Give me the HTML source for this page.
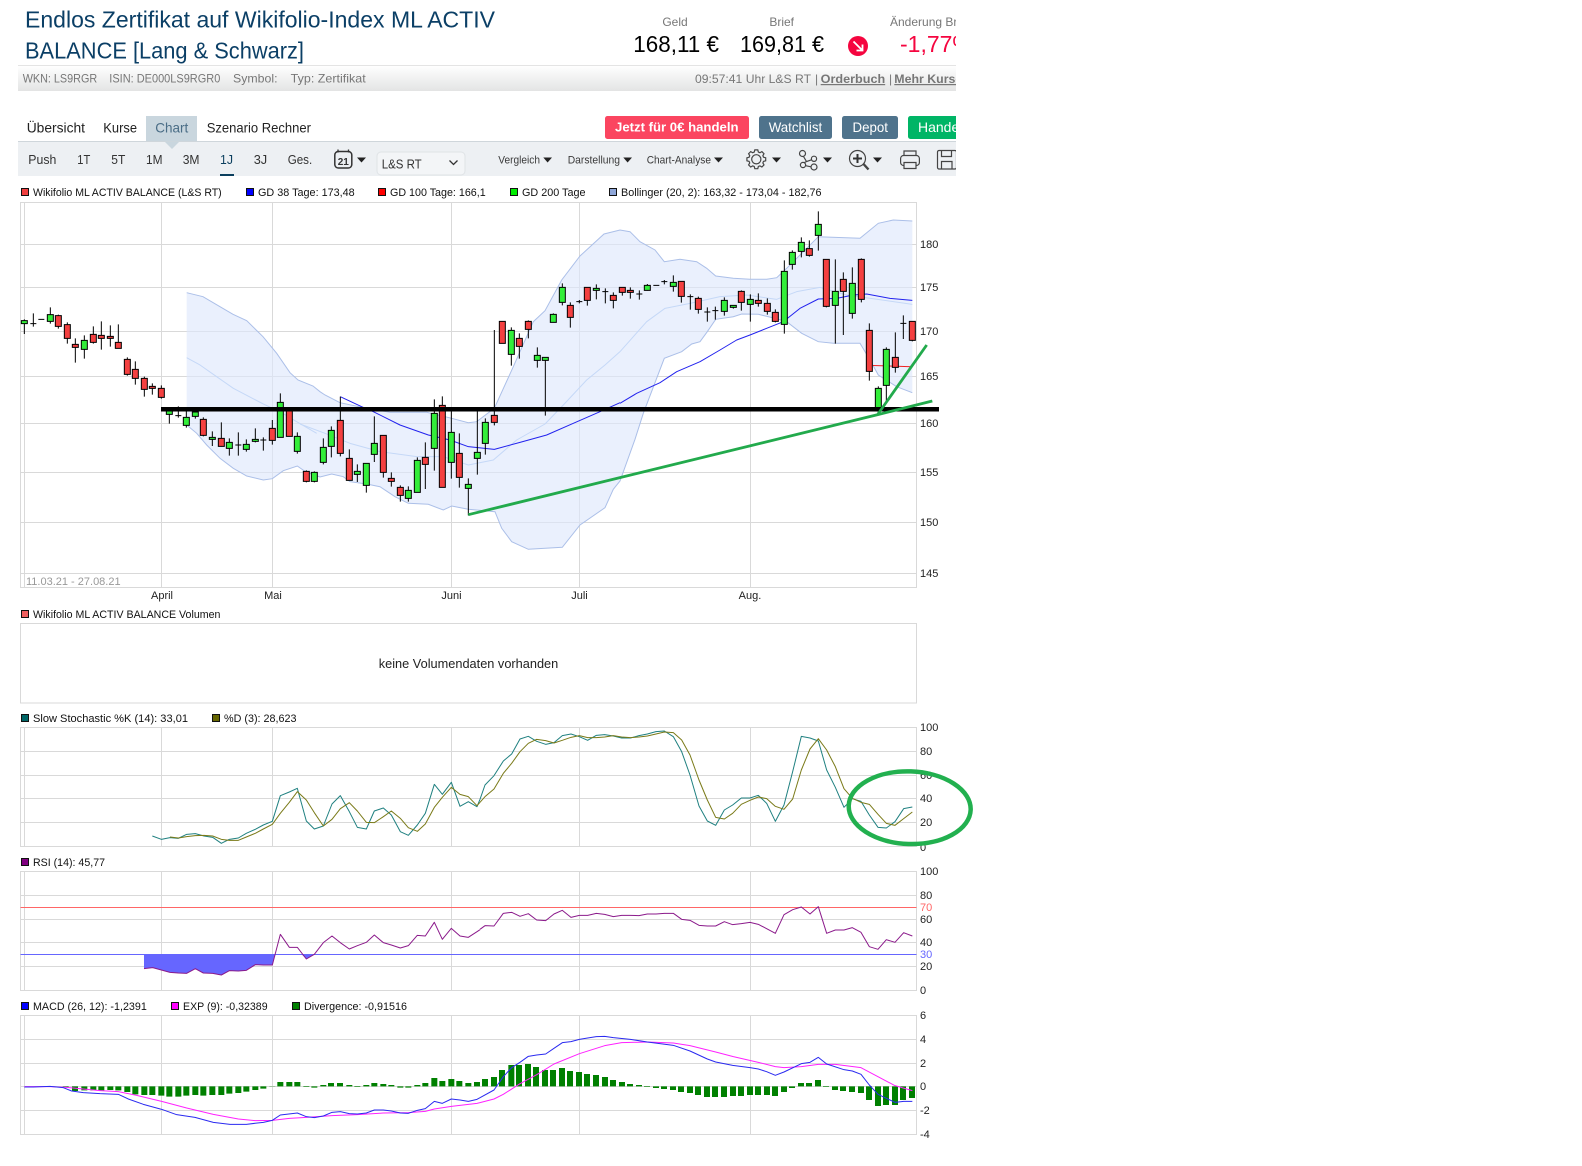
<!DOCTYPE html>
<html lang="de">
<head>
<meta charset="utf-8">
<title>Endlos Zertifikat auf Wikifolio-Index ML ACTIV BALANCE</title>
<style>
html,body{margin:0;padding:0;background:#fff}
svg{display:block;font-family:"Liberation Sans",Arial,sans-serif}
.v{vector-effect:non-scaling-stroke}
.ln{fill:none;vector-effect:non-scaling-stroke;stroke-width:1;stroke-linejoin:round}
.g{stroke:#d9d9d9;stroke-width:1;fill:none}
.lg{font-size:11px;fill:#111}
.ax{font-size:11px;fill:#222}
.ui{font-size:13px;fill:#333}
.sm{font-size:11px;fill:#3a3a3a}
.info{font-size:12px;fill:#777}
.ic{fill:none;stroke:#444;stroke-width:1.2}
</style>
</head>
<body>
<svg xmlns="http://www.w3.org/2000/svg" width="1582" height="1166" viewBox="0 0 1582 1166">
<defs>
<clipPath id="pg"><rect x="0" y="0" width="956" height="180"/></clipPath>
<linearGradient id="bar" x1="0" y1="0" x2="0" y2="1"><stop offset="0" stop-color="#fff"/><stop offset="1" stop-color="#e3e4e4"/></linearGradient>
</defs>

<g clip-path="url(#pg)">
<text x="25" y="27.5" font-size="23.5" fill="#0b3f66" textLength="470" lengthAdjust="spacingAndGlyphs">Endlos Zertifikat auf Wikifolio-Index ML ACTIV</text>
<text x="25" y="58.5" font-size="23.5" fill="#0b3f66" textLength="279" lengthAdjust="spacingAndGlyphs">BALANCE [Lang &amp; Schwarz]</text>

<text x="675" y="26" class="info" text-anchor="middle">Geld</text>
<text x="781.7" y="26" class="info" text-anchor="middle">Brief</text>
<text x="890" y="26" class="info">Änderung Brief</text>
<text x="633.3" y="52" font-size="23" fill="#000" textLength="85.7" lengthAdjust="spacingAndGlyphs">168,11 €</text>
<text x="740" y="52" font-size="23" fill="#000" textLength="84" lengthAdjust="spacingAndGlyphs">169,81 €</text>
<circle cx="858" cy="46" r="10" fill="#f5053f"/>
<path d="M853.5 41.5L862 50M862.5 44.5V50.5H856.5" fill="none" stroke="#fff" stroke-width="1.8"/>
<text x="900" y="52" font-size="23" fill="#f5053f">-1,77%</text>

<rect x="18" y="65.5" width="938" height="25.5" fill="url(#bar)"/>
<rect x="18" y="65" width="938" height="1" fill="#e4e4e4"/>
<text x="22.7" y="82.5" class="info" textLength="74.5" lengthAdjust="spacingAndGlyphs">WKN: LS9RGR</text>
<text x="109.3" y="82.5" class="info" textLength="111" lengthAdjust="spacingAndGlyphs">ISIN: DE000LS9RGR0</text>
<text x="233" y="82.5" class="info" textLength="44.5" lengthAdjust="spacingAndGlyphs">Symbol:</text>
<text x="290.7" y="82.5" class="info" textLength="75" lengthAdjust="spacingAndGlyphs">Typ: Zertifikat</text>
<text x="695" y="83" class="info" textLength="116" lengthAdjust="spacingAndGlyphs">09:57:41 Uhr L&amp;S RT</text>
<text x="815" y="83" class="info">|</text>
<text x="820.7" y="83" class="info" font-weight="bold" text-decoration="underline" textLength="64.5" lengthAdjust="spacingAndGlyphs">Orderbuch</text>
<text x="889" y="83" class="info">|</text>
<text x="894.3" y="83" class="info" font-weight="bold" text-decoration="underline" textLength="68" lengthAdjust="spacingAndGlyphs">Mehr Kurse</text>

<rect x="146" y="116" width="51" height="25" fill="#c9d6de"/>
<text x="26.7" y="132.7" font-size="14" fill="#222" textLength="58.3" lengthAdjust="spacingAndGlyphs">Übersicht</text>
<text x="103.3" y="132.7" font-size="14" fill="#222" textLength="33.7" lengthAdjust="spacingAndGlyphs">Kurse</text>
<text x="155.3" y="132.7" font-size="14" fill="#4a6d86" textLength="33" lengthAdjust="spacingAndGlyphs">Chart</text>
<text x="206.7" y="132.7" font-size="14" fill="#222" textLength="104.3" lengthAdjust="spacingAndGlyphs">Szenario Rechner</text>

<rect x="605" y="116" width="144" height="23" rx="2.5" fill="#fb4560"/>
<text x="615" y="131.7" font-size="13" font-weight="bold" fill="#fff" textLength="123.5" lengthAdjust="spacingAndGlyphs">Jetzt für 0€ handeln</text>
<rect x="759" y="116" width="73" height="23" rx="2.5" fill="#4f738c"/>
<text x="768.7" y="132" font-size="14" fill="#fff" textLength="53.5" lengthAdjust="spacingAndGlyphs">Watchlist</text>
<rect x="842" y="116" width="56" height="23" rx="2.5" fill="#4f738c"/>
<text x="852.500" y="132" font-size="14" fill="#fff" textLength="35.500" lengthAdjust="spacingAndGlyphs">Depot</text>
<rect x="908" y="116" width="60" height="23" rx="2.5" fill="#00b566"/>
<text x="918" y="132" font-size="14" fill="#fff">Handeln</text>

<rect x="18" y="141" width="938" height="35" fill="#edf0f3"/>
<rect x="18" y="141" width="938" height="1" fill="#cfd6db"/>
<path d="M164.500 141.500H179.500L172 149Z" fill="#c9d6de"/>

<text x="28.3" y="164" class="ui" textLength="28" lengthAdjust="spacingAndGlyphs">Push</text>
<text x="77.3" y="164" class="ui" textLength="13" lengthAdjust="spacingAndGlyphs">1T</text>
<text x="111.3" y="164" class="ui" textLength="14" lengthAdjust="spacingAndGlyphs">5T</text>
<text x="146" y="164" class="ui" textLength="16.500" lengthAdjust="spacingAndGlyphs">1M</text>
<text x="182.700" y="164" class="ui" textLength="16.800" lengthAdjust="spacingAndGlyphs">3M</text>
<text x="220" y="164" class="ui" style="fill:#0b3f5e" textLength="13" lengthAdjust="spacingAndGlyphs">1J</text>
<rect x="220" y="174" width="14" height="2" fill="#0b3f5e"/>
<text x="253.700" y="164" class="ui" textLength="13.500" lengthAdjust="spacingAndGlyphs">3J</text>
<text x="287.700" y="164" class="ui" textLength="24.500" lengthAdjust="spacingAndGlyphs">Ges.</text>

<rect x="334.800" y="151.500" width="17" height="16.500" rx="3.500" fill="none" stroke="#333" stroke-width="1.500"/>
<path d="M338 149.500V152.500M348.500 149.500V152.500" stroke="#333" stroke-width="1.300"/>
<text x="343.300" y="165" font-size="10" font-weight="bold" fill="#333" text-anchor="middle">21</text>
<path d="M357 157.500H366L361.500 162.500Z" fill="#222"/>

<rect x="377" y="152" width="88" height="23" rx="4" fill="#f3f5f7" stroke="#dfe3e6"/>
<text x="381.700" y="168.300" class="ui" textLength="40" lengthAdjust="spacingAndGlyphs">L&amp;S RT</text>
<path d="M449.500 160.500L453.500 164.500L457.500 160.500" fill="none" stroke="#333" stroke-width="1.300"/>

<text x="498.300" y="163.300" class="sm" textLength="41.700" lengthAdjust="spacingAndGlyphs">Vergleich</text>
<path d="M543.300 157.500H552L547.600 162.500Z" fill="#222"/>
<text x="567.700" y="163.300" class="sm" textLength="52.300" lengthAdjust="spacingAndGlyphs">Darstellung</text>
<path d="M623.300 157.500H632L627.600 162.500Z" fill="#222"/>
<text x="646.700" y="163.300" class="sm" textLength="64.300" lengthAdjust="spacingAndGlyphs">Chart-Analyse</text>
<path d="M714 157.500H723L718.500 162.500Z" fill="#222"/>

<g transform="translate(756.300 159.300)">
<path class="ic" d="M7.200 -2.070L9.390 -1.490V1.490L7.200 2.070L6.560 3.640L7.690 5.580L5.580 7.690L3.640 6.560L2.070 7.200L1.490 9.390H-1.490L-2.070 7.200L-3.640 6.560L-5.580 7.690L-7.690 5.580L-6.560 3.640L-7.200 2.070L-9.390 1.490V-1.490L-7.200 -2.070L-6.560 -3.640L-7.690 -5.580L-5.580 -7.690L-3.640 -6.560L-2.070 -7.200L-1.490 -9.390H1.490L2.070 -7.200L3.640 -6.560L5.580 -7.690L7.690 -5.580L6.560 -3.640Z"/>
<circle r="4.600" class="ic" stroke-width="1.600"/>
</g>
<path d="M772 157.500H781L776.500 162.500Z" fill="#222"/>

<g class="ic">
<circle cx="802.500" cy="153.500" r="3"/>
<circle cx="814" cy="158.800" r="2.600"/>
<circle cx="803" cy="165" r="2.600"/>
<circle cx="814" cy="167" r="3"/>
<path d="M803.500 156.500L806.500 161.500M811.500 159.800L806.500 161.500L804 162.800M805.500 165.700L811 166.800"/>
</g>
<path d="M823 157.500H832L827.500 162.500Z" fill="#222"/>

<circle cx="857.500" cy="158.500" r="8" class="ic"/>
<path d="M863.500 164L868.500 169.500" stroke="#444" stroke-width="2.400" fill="none"/>
<path d="M853 158.500H862M857.500 154V163" stroke="#333" stroke-width="2" fill="none"/>
<path d="M873 157.500H882L877.500 162.500Z" fill="#222"/>

<g class="ic">
<path d="M904 156V151H916V156"/>
<rect x="900.600" y="155.500" width="18.800" height="10" rx="3"/>
<path d="M904 162.500H916V168.500H904Z" fill="#edf0f3"/>
</g>
<g class="ic">
<rect x="937.500" y="150.500" width="19" height="18.500" rx="1.500"/>
<path d="M941.500 150.500V156.500H951.500V150.500M941.500 169V161.500H952V169"/>
</g>
</g>

<!-- Legend main -->
<g stroke="#111" stroke-width="1">
<rect x="21.500" y="188.500" width="7" height="7" fill="#f04040"/>
<rect x="246.500" y="188.500" width="7" height="7" fill="#0000ff"/>
<rect x="378.500" y="188.500" width="7" height="7" fill="#ff0000"/>
<rect x="510.500" y="188.500" width="7" height="7" fill="#00ee00"/>
<rect x="609.500" y="188.500" width="7" height="7" fill="#8ea6d8"/>
<rect x="21.500" y="610.500" width="7" height="7" fill="#f06060"/>
<rect x="21.500" y="714.500" width="7" height="7" fill="#006666"/>
<rect x="212.500" y="714.500" width="7" height="7" fill="#666600"/>
<rect x="21.500" y="858.500" width="7" height="7" fill="#800080"/>
<rect x="21.500" y="1002.500" width="7" height="7" fill="#0000ff"/>
<rect x="171.500" y="1002.500" width="7" height="7" fill="#ff00ff"/>
<rect x="292.500" y="1002.500" width="7" height="7" fill="#008000"/>
</g>
<text x="33" y="196" class="lg" textLength="188.700" lengthAdjust="spacingAndGlyphs">Wikifolio ML ACTIV BALANCE (L&amp;S RT)</text>
<text x="258" y="196" class="lg" textLength="96.700" lengthAdjust="spacingAndGlyphs">GD 38 Tage: 173,48</text>
<text x="390" y="196" class="lg" textLength="95.700" lengthAdjust="spacingAndGlyphs">GD 100 Tage: 166,1</text>
<text x="522" y="196" class="lg" textLength="63.500" lengthAdjust="spacingAndGlyphs">GD 200 Tage</text>
<text x="621" y="196" class="lg" textLength="200.500" lengthAdjust="spacingAndGlyphs">Bollinger (20, 2): 163,32 - 173,04 - 182,76</text>
<text x="33" y="618" class="lg" textLength="187.400" lengthAdjust="spacingAndGlyphs">Wikifolio ML ACTIV BALANCE Volumen</text>
<text x="33" y="722" class="lg" textLength="155" lengthAdjust="spacingAndGlyphs">Slow Stochastic %K (14): 33,01</text>
<text x="224" y="722" class="lg" textLength="72.500" lengthAdjust="spacingAndGlyphs">%D (3): 28,623</text>
<text x="33" y="866" class="lg" textLength="72" lengthAdjust="spacingAndGlyphs">RSI (14): 45,77</text>
<text x="33" y="1010" class="lg" textLength="113.800" lengthAdjust="spacingAndGlyphs">MACD (26, 12): -1,2391</text>
<text x="183" y="1010" class="lg" textLength="84.600" lengthAdjust="spacingAndGlyphs">EXP (9): -0,32389</text>
<text x="304" y="1010" class="lg" textLength="103" lengthAdjust="spacingAndGlyphs">Divergence: -0,91516</text>

<!-- Main chart grid -->
<path class="g" d="M20.500 202.500H916.500V587.500H20.500ZM24.500 202.500V587.500M161.500 202.500V587.500M272.500 202.500V587.500M451.500 202.500V587.500M579.500 202.500V587.500M750.500 202.500V587.500M20.500 244.500H916.500M20.500 287.500H916.500M20.500 331.500H916.500M20.500 376.500H916.500M20.500 423.500H916.500M20.500 472.500H916.500M20.500 522.500H916.500M20.500 573.500H916.500"/>

<polygon fill="#dde7fb" fill-opacity=".62" points="186.700,292.700 203,296.700 220,306.700 233,314.300 246.700,320.700 263,336.700 276.700,353.300 290,372.700 298,380 313,386 320,391.700 325,395 340,402.700 361.700,407.300 390,412.300 426.700,412.300 451.700,418.300 468.300,422.700 476.700,421.700 494.300,408.300 513.300,366.700 533.300,321.700 545,310.700 561.700,280 580,256 604,234 620,230 630,231.700 640,241.700 655,250 664.300,261.700 680,259.300 696.700,261.700 706.700,268.300 715.700,276 733.300,278.300 750,279.300 766.700,279.300 776.700,277.700 786.700,268.300 801.700,253.300 818.300,236.700 860,238.300 878.300,223.300 893.300,220 912.300,221 912.300,392.700 896.700,386.700 878.300,375 870,360 860,343.300 833.300,343.300 818.300,341.700 801.700,333.300 786.700,321.700 775,318.300 758.300,314.300 741.700,314 733.300,316.700 715.700,319.300 707.300,331.700 700,341.700 691.700,344 681.700,351.700 664.300,358.300 643.300,413.300 635,439.300 620,481 613.300,489.300 605,507.700 580,525 562.300,547.300 528.300,549.300 511.700,541.700 501.700,528.300 495,511.700 468.300,509.300 451.700,506 443.300,510 428.300,504.300 408.300,503.300 395,496.700 380,486.700 366.700,484 350,481.700 343.300,476.700 331.700,474 320,477 306,472 297.300,466 283.300,470.700 272.300,478.700 263.300,480 246.700,476 233.300,468.300 220,458.300 206.700,445 196.700,433.300 186.700,425"/>
<polyline fill="none" stroke="#abbfe8" stroke-width="1" points="186.700,292.700 203,296.700 220,306.700 233,314.300 246.700,320.700 263,336.700 276.700,353.300 290,372.700 298,380 313,386 320,391.700 325,395 340,402.700 361.700,407.300 390,412.300 426.700,412.300 451.700,418.300 468.300,422.700 476.700,421.700 494.300,408.300 513.300,366.700 533.300,321.700 545,310.700 561.700,280 580,256 604,234 620,230 630,231.700 640,241.700 655,250 664.300,261.700 680,259.300 696.700,261.700 706.700,268.300 715.700,276 733.300,278.300 750,279.300 766.700,279.300 776.700,277.700 786.700,268.300 801.700,253.300 818.300,236.700 860,238.300 878.300,223.300 893.300,220 912.300,221"/>
<polyline fill="none" stroke="#abbfe8" stroke-width="1" points="912.300,392.700 896.700,386.700 878.300,375 870,360 860,343.300 833.300,343.300 818.300,341.700 801.700,333.300 786.700,321.700 775,318.300 758.300,314.300 741.700,314 733.300,316.700 715.700,319.300 707.300,331.700 700,341.700 691.700,344 681.700,351.700 664.300,358.300 643.300,413.300 635,439.300 620,481 613.300,489.300 605,507.700 580,525 562.300,547.300 528.300,549.300 511.700,541.700 501.700,528.300 495,511.700 468.300,509.300 451.700,506 443.300,510 428.300,504.300 408.300,503.300 395,496.700 380,486.700 366.700,484 350,481.700 343.300,476.700 331.700,474 320,477 306,472 297.300,466 283.300,470.700 272.300,478.700 263.300,480 246.700,476 233.300,468.300 220,458.300 206.700,445 196.700,433.300 186.700,425"/>

<!-- BB middle -->
<g transform="translate(0 200) scale(.33333)"><polyline class="ln" stroke="#c5d8f7" points="560,473 600,495 650,530 700,565 790,612 840,635 890,665 950,700"/></g>
<g transform="translate(300 280) scale(.33333)"><polyline class="ln" stroke="#c5d8f7" points="0,432 75,460 150,490 240,515 350,530 430,530 505,555 580,540 650,480 735,432 790,375 860,300 915,255 960,215"/></g>
<g transform="translate(620 200) scale(.33333)"><polyline class="ln" stroke="#c5d8f7" points="0,455 40,410 80,365 135,325 210,310 300,290 380,285 470,298 530,275 600,262 680,285 877,313"/></g>

<!-- MA 38 / 100 -->
<g transform="translate(300 280) scale(.33333)"><polyline class="ln" stroke="#2222ee" points="121,350 185,380 220,395 300,435 385,465 450,480 505,500 583,508 660,487 740,465 820,430 900,395 960,368"/></g>
<g transform="translate(620 200) scale(.33333)"><polyline class="ln" stroke="#2222ee" points="0,610 50,580 120,548 170,515 240,485 300,450 350,420 390,405 440,385 490,365 540,325 595,297 650,295 700,285 740,282 810,295 877,301"/></g>
<path d="M873 365.500L912 366.700" stroke="#ee2222" stroke-width="1" fill="none"/>

<!-- Candles part 1 -->
<g transform="translate(0 200) scale(.33333)">
<path class="v" fill="none" stroke="#000" stroke-width="1" d="M73 358V402M100 340V380M151 322V371M175 344V386M202 367V431M226 415V488M253 406V476M280 379V431M304 364V449M331 376V440M355 373V445M382 472V527M406 484V554M433 530V590M457 550V584M484 556V596M508 625V671M535 619V653M559 630V683M586 630V656M610 652V709M637 694V738M664 667V740M688 715V767M715 697V767M739 718V755M766 685V727M790 712V752M817 660V734M841 580V712M868 625V709M892 697V761M919 811V847M943 814V847M91 371h18M115 358h18M526 647h18M706 735h18M781 720h18"/>
<path class="v" fill="#33ee3a" stroke="#000" stroke-width="1" d="M64 362h18v9h-18zM142 344h18v20h-18zM244 421h18v27h-18zM499 630h18v13h-18zM550 652h18v24h-18zM577 636h18v13h-18zM628 712h18v6h-18zM679 727h18v18h-18zM730 733h18v15h-18zM757 718h18v6h-18zM832 607h18v105h-18zM883 709h18v45h-18zM934 817h18v27h-18z"/>
<path class="v" fill="#f44040" stroke="#000" stroke-width="1" d="M166 347h18v32h-18zM193 374h18v41h-18zM217 433h18v9h-18zM271 403h18v24h-18zM295 406h18v9h-18zM322 409h18v6h-18zM346 427h18v18h-18zM373 478h18v45h-18zM397 508h18v27h-18zM424 535h18v33h-18zM448 559h18v6h-18zM475 565h18v27h-18zM601 658h18v48h-18zM655 715h18v24h-18zM808 685h18v36h-18zM859 630h18v79h-18zM910 814h18v30h-18z"/>
</g>
<!-- Candles part 2 -->
<g transform="translate(300 280) scale(.33333)">
<path class="v" fill="none" stroke="#000" stroke-width="1" d="M70 475V553M94 439V532M121 350V529M148 508V601M172 553V606M199 550V638M223 409V546M250 466V593M274 577V620M301 616V665M325 619V665M352 532V637M376 487V627M403 358V572M427 349V622M454 382V596M478 460V623M505 595V706M532 394V584M556 415V524M583 150V436M634 142V257M658 160V236M685 121V175M712 202V263M736 232V407M760 100V127M787 10V76M811 67V143M838 60V70M862 22V77M889 13V58M916 25V70M940 37V85M829 65h18M907 35h18"/>
<path class="v" fill="#33ee3a" stroke="#000" stroke-width="1" d="M61 502h18v45h-18zM85 451h18v48h-18zM163 574h18v9h-18zM190 550h18v66h-18zM214 490h18v33h-18zM316 631h18v24h-18zM343 541h18v96h-18zM394 400h18v105h-18zM445 457h18v90h-18zM496 613h18v12h-18zM523 517h18v18h-18zM547 427h18v63h-18zM625 151h18v72h-18zM703 226h18v15h-18zM727 232h18v9h-18zM751 103h18v24h-18zM778 22h18v45h-18zM880 25h18v6h-18z"/>
<path class="v" fill="#f44040" stroke="#000" stroke-width="1" d="M112 421h18v99h-18zM139 535h18v66h-18zM241 466h18v111h-18zM265 595h18v9h-18zM292 622h18v24h-18zM367 532h18v21h-18zM418 376h18v246h-18zM469 520h18v72h-18zM574 406h18v21h-18zM598 124h18v66h-18zM649 175h18v24h-18zM676 124h18v24h-18zM802 76h18v36h-18zM853 22h18v39h-18zM931 46h18v15h-18z"/>
</g>
<!-- Candles part 3 -->
<g transform="translate(620 200) scale(.33333)">
<path class="v" fill="none" stroke="#000" stroke-width="1" d="M7 262V287M31 262V296M58 271V299M82 252V272M133 240V253M160 226V275M184 244V308M211 283V329M235 290V341M262 322V365M286 320V359M313 292V347M340 316V326M364 271V332M391 283V365M415 280V320M442 295V344M466 328V367M493 181V401M517 151V209M544 112V172M568 121V170M595 34V152M619 178V322M646 178V431M670 217V405M697 202V356M724 175V307M748 370V542M775 559V636M799 442V610M826 397V518M850 346V417M877 364V424M49 282h18M100 256h18M124 245h18M202 290h18M253 336h18M277 332h18M841 370h18"/>
<path class="v" fill="#33ee3a" stroke="#000" stroke-width="1" d="M73 256h18v15h-18zM151 247h18v12h-18zM304 301h18v33h-18zM331 316h18v6h-18zM382 298h18v15h-18zM484 214h18v159h-18zM508 157h18v36h-18zM535 127h18v27h-18zM586 73h18v33h-18zM637 274h18v42h-18zM688 250h18v90h-18zM766 565h18v60h-18zM790 448h18v108h-18z"/>
<path class="v" fill="#f44040" stroke="#000" stroke-width="1" d="M-2 262h18v15h-18zM22 271h18v6h-18zM175 244h18v45h-18zM226 295h18v33h-18zM355 274h18v33h-18zM406 301h18v9h-18zM433 310h18v24h-18zM457 337h18v27h-18zM559 146h18v20h-18zM610 178h18v141h-18zM661 238h18v36h-18zM715 178h18v120h-18zM739 391h18v123h-18zM817 472h18v30h-18zM868 364h18v57h-18z"/>
</g>

<!-- Hand-drawn overlays -->
<path d="M161 409.300H939" stroke="#000" stroke-width="4.500" fill="none"/>
<path d="M468.300 514.700L878.300 414.500L932.300 401" stroke="#22aa4c" stroke-width="2.800" fill="none"/>
<path d="M878 414L926.700 345" stroke="#22aa4c" stroke-width="2.800" fill="none"/>

<!-- Main axis labels -->
<g class="ax">
<text x="920" y="248">180</text><text x="920" y="291">175</text><text x="920" y="335">170</text><text x="920" y="380">165</text><text x="920" y="427">160</text><text x="920" y="476">155</text><text x="920" y="526">150</text><text x="920" y="577">145</text>
</g>
<g class="ax" text-anchor="middle" font-size="11">
<text x="162" y="599">April</text><text x="273" y="599">Mai</text><text x="451.500" y="599">Juni</text><text x="579.500" y="599">Juli</text><text x="750" y="599">Aug.</text>
</g>
<text x="26" y="585" font-size="11" fill="#999">11.03.21 - 27.08.21</text>

<!-- Volume -->
<rect x="20.500" y="623.500" width="896" height="79.500" fill="#fff" stroke="#d9d9d9"/>
<text x="468.500" y="668" font-size="12.800" fill="#222" text-anchor="middle" textLength="179.500" lengthAdjust="spacingAndGlyphs">keine Volumendaten vorhanden</text>

<!-- Stochastic -->
<path class="g" d="M20.500 727.500H916.500V846.500H20.500ZM24.500 727.500V846.500M161.500 727.500V846.500M272.500 727.500V846.500M451.500 727.500V846.500M579.500 727.500V846.500M750.500 727.500V846.500M20.500 751.500H916.500M20.500 775.500H916.500M20.500 798.500H916.500M20.500 822.500H916.500"/>
<g transform="translate(0 700) scale(.33333)">
<polyline class="ln" stroke="#1f8080" points="457,408 484,418 510,413 535,415 560,403 586,401 612,408 638,412 664,430 688,418 715,414 739,400 766,388 790,375 817,364 841,287 868,276 892,265 919,363 943,387 970,378 996,312 1021,287 1048,335 1072,382 1099,387 1123,333 1150,324 1174,345 1201,395 1225,406 1252,375 1276,340 1303,253 1327,283 1354,247 1380,319 1405,305 1431,320 1440,298"/>
<polyline class="ln" stroke="#7a7a18" points="510,411 535,414 560,410 586,407 612,406 638,408 664,418 688,421 715,421 739,411 766,400 790,387 817,373 841,340 868,307 892,275 919,300 943,338 970,378 996,358 1021,326 1048,308 1072,333 1099,367 1123,368 1150,350 1174,333 1201,355 1225,383 1252,394 1276,372 1303,322 1327,292 1354,262 1380,283 1405,290 1431,317 1440,307"/>
</g>
<g transform="translate(480 700) scale(.33333)">
<polyline class="ln" stroke="#1f8080" points="0,298 15,255 42,227 70,183 95,162 120,117 145,109 170,124 197,133 222,128 247,107 273,102 298,110 323,121 349,106 374,104 400,108 425,114 451,114 477,107 502,102 528,95 553,93 580,110 605,155 630,225 657,318 682,363 707,376 733,330 758,315 784,294 810,294 835,286 860,310 886,364 912,315 938,215 964,109 990,114 1015,123 1040,210 1066,262 1092,322 1117,296 1143,304 1168,345 1194,382 1219,384 1245,365 1271,326 1297,321"/>
<polyline class="ln" stroke="#7a7a18" points="0,307 15,290 42,267 70,220 95,190 120,155 145,130 170,118 197,122 222,129 247,121 273,112 298,107 323,113 349,113 374,111 400,107 425,111 451,113 477,111 502,108 528,102 553,96 580,98 605,120 630,165 657,240 682,300 707,352 733,357 758,340 784,313 810,301 835,291 860,296 886,319 912,328 938,297 964,210 990,147 1015,116 1040,150 1066,200 1092,266 1117,295 1143,307 1168,313 1194,343 1219,370 1245,376 1271,356 1297,336"/>
</g>
<g class="ax">
<text x="920" y="731">100</text><text x="920" y="755">80</text><text x="920" y="779">60</text><text x="920" y="802">40</text><text x="920" y="826">20</text><text x="920" y="851">0</text>
</g>
<ellipse cx="909.700" cy="807.700" rx="61" ry="36.300" fill="none" stroke="#22b04f" stroke-width="4.500" transform="rotate(2 909.700 807.700)"/>

<!-- RSI -->
<path class="g" d="M20.500 871.500H916.500V990.500H20.500ZM24.500 871.500V990.500M161.500 871.500V990.500M272.500 871.500V990.500M451.500 871.500V990.500M579.500 871.500V990.500M750.500 871.500V990.500M20.500 895.500H916.500M20.500 919.500H916.500M20.500 942.500H916.500M20.500 966.500H916.500"/>
<path d="M20.500 907.500H916.500" stroke="#f66" fill="none"/>
<path d="M20.500 954.500H916.500" stroke="#66f" fill="none"/>
<g transform="translate(0 845) scale(.33333)">
<polygon fill="#6666ff" points="432,328 432,371 458,368 484,375 510,382 535,384 560,385 586,371 610,384 638,385 664,390 688,377 715,378 739,376 766,359 790,360 817,360 825,328"/>
<polygon fill="#6666ff" points="905,328 919,342 943,328"/>
<polyline class="ln" stroke="#8b1a8b" points="432,371 458,368 484,375 510,382 535,384 560,385 586,371 610,384 638,385 664,390 688,377 715,378 739,376 766,359 790,360 817,360 841,268 868,307 892,307 919,342 943,328 970,293 996,273 1021,293 1048,312 1072,302 1099,292 1123,270 1150,293 1174,300 1201,309 1225,302 1252,271 1276,273 1303,232 1327,283 1354,250 1380,273 1405,277 1431,260 1440,254"/>
</g>
<g transform="translate(480 845) scale(.33333)">
<polyline class="ln" stroke="#8b1a8b" points="0,253 15,242 42,243 70,205 95,202 120,214 145,206 170,225 197,227 222,207 247,196 273,217 298,211 323,211 349,205 374,208 400,215 425,211 451,211 477,212 502,207 528,207 553,205 580,205 605,223 630,226 657,241 682,243 707,243 733,230 758,239 784,236 810,232 835,238 860,251 886,265 912,209 938,194 964,186 990,207 1015,185 1040,265 1066,255 1092,255 1117,248 1143,262 1168,305 1194,313 1219,284 1245,292 1271,263 1297,273"/>
</g>
<g class="ax">
<text x="920" y="875">100</text><text x="920" y="899">80</text><text x="920" y="911" style="fill:#f66">70</text><text x="920" y="923">60</text><text x="920" y="946">40</text><text x="920" y="958" style="fill:#66f">30</text><text x="920" y="970">20</text><text x="920" y="994">0</text>
</g>

<!-- MACD -->
<path class="g" d="M20.500 1015.500H916.500V1134.500H20.500ZM24.500 1015.500V1134.500M161.500 1015.500V1134.500M272.500 1015.500V1134.500M451.500 1015.500V1134.500M579.500 1015.500V1134.500M750.500 1015.500V1134.500M20.500 1039.500H916.500M20.500 1063.500H916.500M20.500 1086.500H916.500M20.500 1110.500H916.500"/>
<g transform="translate(0 985) scale(.33333)">
<path fill="none" stroke="#008000" stroke-width="18" d="M197 304V308M225 304V318M253 304V316M280 304V316M304 304V316M331 304V315M355 304V316M382 304V321M406 304V328M433 304V330M457 304V330M484 304V332M508 304V335M535 304V335M559 304V332M586 304V330M610 304V332M637 304V330M664 304V330M688 304V326M715 304V324M739 304V320M766 304V315M790 304V311M817 304V305M841 291V304M868 291V304M892 291V304M919 303V305M943 304V308M970 300V304M993 294V304M1020 294V304M1048 300V304M1072 303V305M1099 300V304M1123 294V304M1150 297V304M1174 300V304M1201 304V308M1225 304V308M1252 300V304M1276 294V304M1303 279V304M1327 288V304M1354 282V304M1378 288V304M1405 294V304M1431 291V304"/>
<polyline class="ln" stroke="#ff22ff" points="73,305 150,305 200,307 250,312 300,317 355,320 410,331 485,349 560,369 640,388 715,402 766,407 817,406 868,400 919,397 996,392 1072,389 1150,384 1225,383 1276,379 1303,372 1354,364 1431,355 1440,353"/>
<polyline class="ln" stroke="#2a2af0" points="73,306 100,306 150,304 190,308 215,318 250,323 300,326 355,328 385,342 430,358 485,373 530,389 585,397 640,412 690,418 739,418 790,412 817,406 841,390 892,384 919,395 943,398 970,393 996,382 1021,380 1048,386 1072,387 1099,384 1123,375 1150,375 1174,378 1201,384 1225,385 1252,376 1276,371 1303,349 1327,355 1354,342 1380,345 1405,349 1431,343 1440,338"/>
</g>
<g transform="translate(480 985) scale(.33333)">
<path fill="none" stroke="#008000" stroke-width="18" d="M15 282V304M42 276V304M66 255V304M94 240V304M117 240V304M144 237V304M168 246V304M195 255V304M219 255V304M246 249V304M270 258V304M297 261V304M321 267V304M348 270V304M375 276V304M399 285V304M426 291V304M450 297V304M477 300V304M501 303V305M528 304V309M552 304V312M579 304V315M603 304V321M630 304V324M654 304V330M681 304V336M705 304V336M732 304V336M759 304V333M783 304V333M810 304V330M834 304V330M861 304V330M885 304V333M912 304V321M936 304V309M963 294V304M987 294V304M1014 285V304M1038 303V305M1065 304V315M1089 304V318M1116 304V321M1143 304V324M1167 304V345M1194 304V363M1218 304V360M1245 304V360M1269 304V345M1296 304V339"/>
<polyline class="ln" stroke="#ff22ff" points="0,353 42,342 70,328 120,296 170,269 222,237 298,206 374,182 425,173 502,171 580,174 630,182 707,201 760,215 835,232 886,245 912,248 964,245 1015,238 1066,238 1143,248 1194,275 1245,302 1297,317"/>
<polyline class="ln" stroke="#2a2af0" points="0,338 42,315 70,275 95,248 120,232 145,214 170,210 197,207 222,190 247,173 273,170 298,163 323,159 349,155 374,154 400,158 451,163 502,171 580,181 630,198 682,222 707,231 758,241 810,248 835,252 860,260 886,271 912,261 964,236 990,232 1015,217 1040,237 1092,254 1117,258 1143,268 1168,300 1194,328 1219,340 1245,352 1271,349 1297,349"/>
</g>
<g class="ax">
<text x="920" y="1019">6</text><text x="920" y="1043">4</text><text x="920" y="1067">2</text><text x="920" y="1090">0</text><text x="920" y="1114">-2</text><text x="920" y="1138">-4</text>
</g>
</svg>
</body>
</html>
